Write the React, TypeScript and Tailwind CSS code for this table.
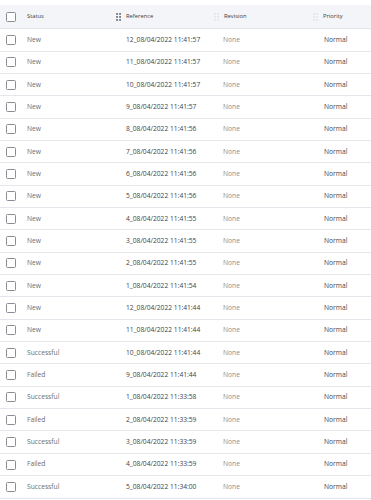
import React from "react";

type Row = { status: string; ref: string };

const rows: Row[] = [
  { status: "New", ref: "12_08/04/2022 11:41:57" },
  { status: "New", ref: "11_08/04/2022 11:41:57" },
  { status: "New", ref: "10_08/04/2022 11:41:57" },
  { status: "New", ref: "9_08/04/2022 11:41:57" },
  { status: "New", ref: "8_08/04/2022 11:41:56" },
  { status: "New", ref: "7_08/04/2022 11:41:56" },
  { status: "New", ref: "6_08/04/2022 11:41:56" },
  { status: "New", ref: "5_08/04/2022 11:41:56" },
  { status: "New", ref: "4_08/04/2022 11:41:55" },
  { status: "New", ref: "3_08/04/2022 11:41:55" },
  { status: "New", ref: "2_08/04/2022 11:41:55" },
  { status: "New", ref: "1_08/04/2022 11:41:54" },
  { status: "New", ref: "12_08/04/2022 11:41:44" },
  { status: "New", ref: "11_08/04/2022 11:41:44" },
  { status: "Successful", ref: "10_08/04/2022 11:41:44" },
  { status: "Failed", ref: "9_08/04/2022 11:41:44" },
  { status: "Successful", ref: "1_08/04/2022 11:33:58" },
  { status: "Failed", ref: "2_08/04/2022 11:33:59" },
  { status: "Successful", ref: "3_08/04/2022 11:33:59" },
  { status: "Failed", ref: "4_08/04/2022 11:33:59" },
  { status: "Successful", ref: "5_08/04/2022 11:34:00" },
];

// drag handle, 2x3 dots
const Grip = ({ active }: { active?: boolean }) => (
  <svg width="5" height="8" viewBox="0 0 5 8" className="shrink-0">
    {[0, 3].map((x) =>
      [0, 3, 6].map((y) => (
        <rect key={`${x}-${y}`} x={x + 0.3} y={y + 0.2} width="1.5" height="1.5" fill={active ? "#3a3a3a" : "#dcdfe3"} />
      ))
    )}
  </svg>
);

const Checkbox = () => (
  <span className="block w-[10px] h-[10px] rounded-[1.5px] border border-[#8a8d91] bg-white" />
);

export default function App() {
  return (
    <div className="w-[371px] h-[500px] bg-white overflow-hidden pt-[5px]" style={{ fontFamily: '"Open Sans", "Noto Sans", sans-serif' }}>
      <div className="flex items-center h-[24.3px] bg-[#f3f5f8] border-b border-[#e1e4e8] text-[5.8px] text-[#3c3c3c]">
        <div className="w-[27px] pl-[6px] flex items-center">
          <Checkbox />
        </div>
        <div className="w-[89px]">Status</div>
        <div className="w-[98px] flex items-center gap-[5px]">
          <Grip active />
          <span>Reference</span>
        </div>
        <div className="w-[99px] flex items-center gap-[5px]">
          <Grip />
          <span>Revision</span>
        </div>
        <div className="flex-1 flex items-center gap-[5px]">
          <Grip />
          <span>Priority</span>
        </div>
      </div>
      {rows.map((r, i) => (
        <div key={i} className="flex items-center h-[22.35px] border-b border-[#e3e6ea] text-[6.7px]">
          <div className="w-[27px] pl-[6px] flex items-center">
            <Checkbox />
          </div>
          <div className="w-[99px] text-[#6b6e72]">{r.status}</div>
          <div className="w-[97px] text-[#3f4246]">{r.ref}</div>
          <div className="w-[101px] text-[#8c8f93]">None</div>
          <div className="flex-1 text-[#44474b]">Normal</div>
        </div>
      ))}
    </div>
  );
}
